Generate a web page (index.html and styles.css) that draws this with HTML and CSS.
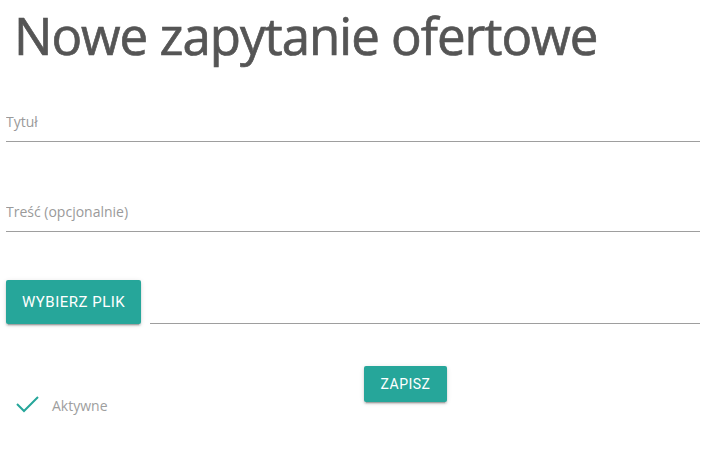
FILE: index.html
```html
<!DOCTYPE html>
<html>
<head>
    <meta charset="UTF-8">
    <title>Nowe zapytanie ofertowe</title>
    <link rel="stylesheet" href="styles.css">
</head>
<body>
    <div id="offer-container">
        <h1 class="page-title">Nowe zapytanie ofertowe</h1>
        <div class="field">
            <input id="offer-title" type="text" placeholder="Tytuł">
        </div>
        <div class="field field-content">
            <input id="offer-desc" type="text" placeholder="Treść (opcjonalnie)">
        </div>
        <div class="file-row">
            <button class="btn btn-large">Wybierz plik</button>
            <div class="file-path"></div>
        </div>
        <div class="bottom-row">
            <label class="check">
                <svg class="check-icon" width="24" height="20" viewBox="0 0 24 20">
                    <path d="M1 9 L8 16 L22 2" fill="none" stroke="#26a69a" stroke-width="2"/>
                </svg>
                <span>Aktywne</span>
            </label>
            <button class="btn">Zapisz</button>
        </div>
    </div>
</body>
</html>
```

FILE: styles.css
```css
body {
    margin: 0;
    background-color: #fff;
    font-family: "Open Sans", "Noto Sans", sans-serif;
}

#offer-container {
    padding: 0 14px 0 6px;
}

.page-title {
    margin: 0;
    padding: 0 0 0 8px;
    font-size: 51px;
    font-weight: 400;
    letter-spacing: -1px;
    color: #555;
    -webkit-text-stroke: 0.7px #555;
    line-height: 70px;
}

.field {
    margin-top: 32px;
}

.field-content {
    margin-top: 50px;
}

input {
    display: block;
    width: 100%;
    box-sizing: border-box;
    height: 40px;
    padding: 0;
    border: none;
    border-bottom: 1px solid #9e9e9e;
    font-family: "Open Sans", "Noto Sans", sans-serif;
    font-size: 14px;
    color: #555;
    outline: none;
}

input::placeholder {
    color: #9a9a9a;
}

.file-row {
    display: flex;
    align-items: flex-end;
    gap: 9px;
    margin-top: 48px;
}

.file-path {
    flex: 1;
    border-bottom: 1px solid #9e9e9e;
}

.btn {
    height: 36px;
    padding: 0 17px;
    border: none;
    border-radius: 2px;
    background-color: #26a69a;
    color: #fff;
    font-family: Roboto, sans-serif;
    font-size: 14px;
    font-weight: 400;
    letter-spacing: .5px;
    text-transform: uppercase;
    box-shadow: 0 2px 2px 0 rgba(0,0,0,.14), 0 1px 5px 0 rgba(0,0,0,.12), 0 3px 1px -2px rgba(0,0,0,.2);
    cursor: pointer;
}

.btn-large {
    height: 44px;
    padding: 0 16px;
    font-size: 15px;
}

.bottom-row {
    display: flex;
    align-items: flex-start;
    margin-top: 42px;
    gap: 256px;
}

.check {
    display: flex;
    align-items: center;
    gap: 12px;
    margin: 29px 0 0 10px;
    color: #9e9e9e;
    font-size: 14px;
}
```
